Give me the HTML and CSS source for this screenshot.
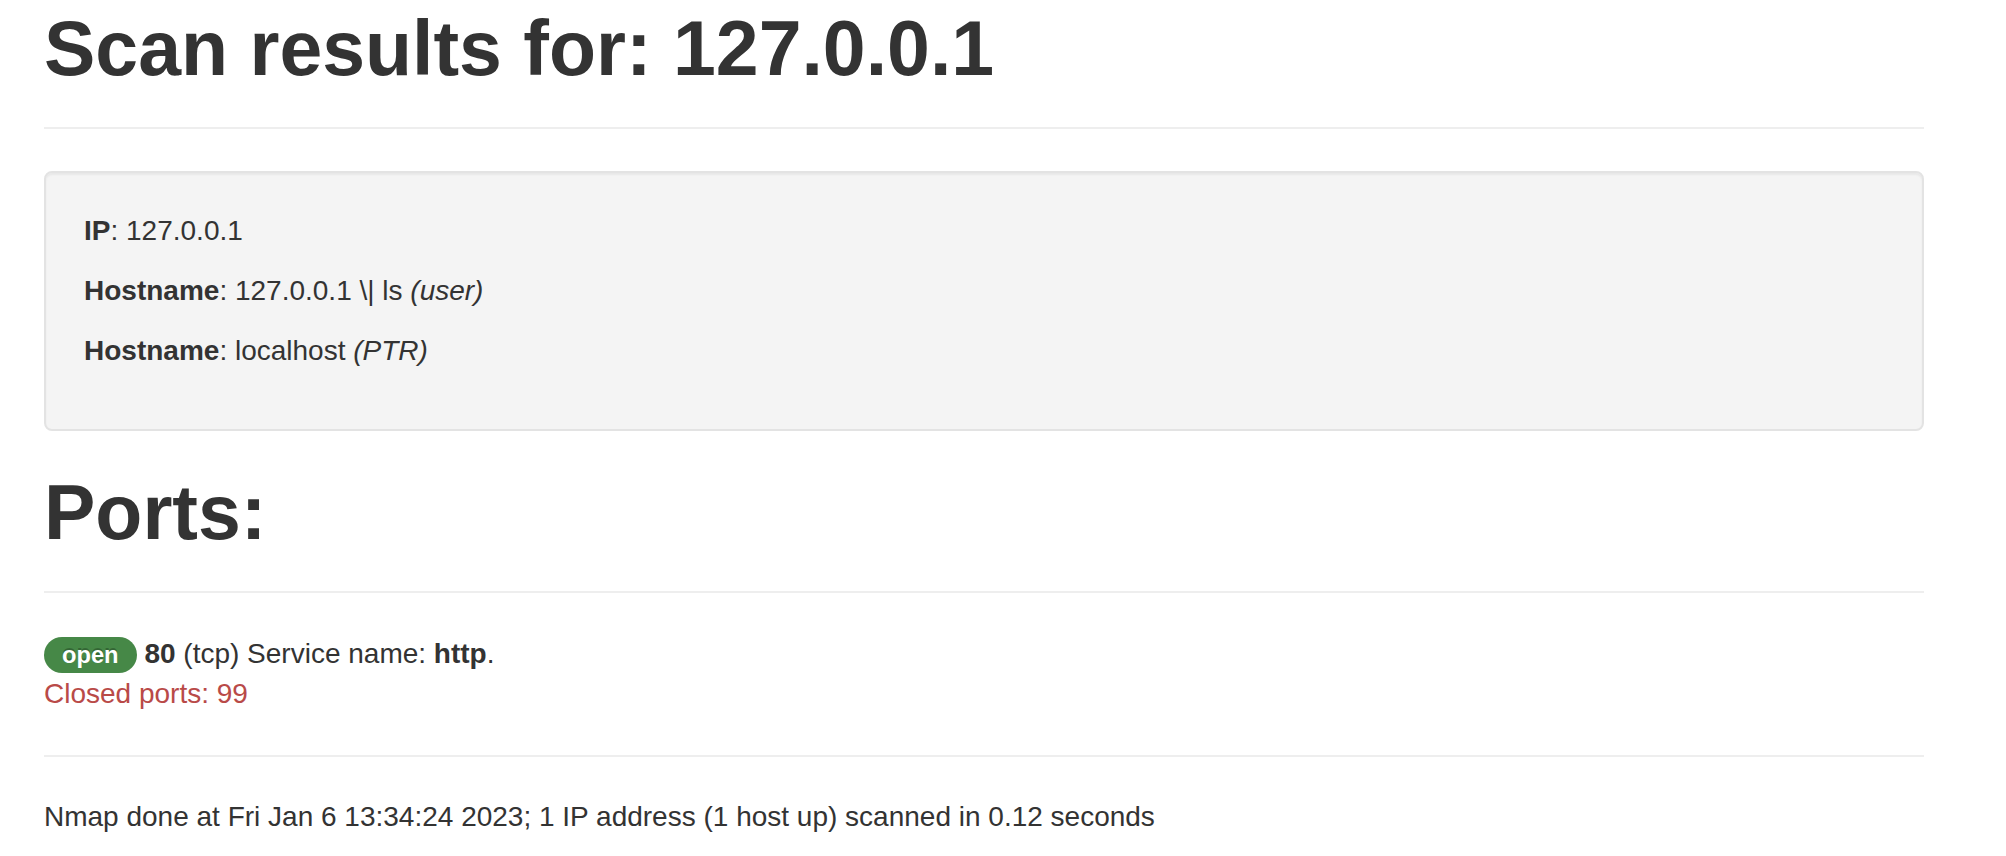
FILE: index.html
```html
<!DOCTYPE html>
<html lang="en">
<head>
<meta charset="utf-8">
<title>Scan results for: 127.0.0.1</title>
<link rel="stylesheet" href="styles.css">
</head>
<body>
<div class="container">
  <div class="page-header page-header-first">
    <h1>Scan results for: 127.0.0.1</h1>
  </div>
  <div class="well">
    <p><strong>IP</strong>: 127.0.0.1</p>
    <p><strong>Hostname</strong>: 127.0.0.1 \| ls <em>(user)</em></p>
    <p><strong>Hostname</strong>: localhost <em>(PTR)</em></p>
  </div>
  <div class="page-header">
    <h1>Ports:</h1>
  </div>
  <div class="ports">
    <div class="port-line"><span class="badge badge-success">open</span> <strong>80</strong> (tcp) Service name: <strong>http</strong>.</div>
    <div class="text-error">Closed ports: 99</div>
  </div>
  <hr class="divider">
  <p class="footer-note">Nmap done at Fri Jan 6 13:34:24 2023; 1 IP address (1 host up) scanned in 0.12 seconds</p>
</div>
</body>
</html>
```
FILE: styles.css
```css
html, body {
  margin: 0;
  padding: 0;
  background: #ffffff;
}

body {
  font-family: "Liberation Sans", Arial, Helvetica, sans-serif;
  font-size: 28px;
  line-height: 40px;
  color: #333333;
}

.container {
  padding: 8px 82px 0 44px;
}

h1 {
  margin: 0;
  font-size: 77px;
  line-height: 80px;
  font-weight: bold;
  color: #333333;
}

.page-header {
  padding-bottom: 39px;
  border-bottom: 2px solid #eeeeee;
  margin: 0 0 41px;
}

.page-header-first {
  margin-bottom: 42px;
}

.well {
  padding: 38px;
  margin-bottom: 41px;
  background-color: #f4f4f4;
  border: 2px solid #e3e3e3;
  border-radius: 8px;
  box-shadow: inset 0 2px 2px rgba(0, 0, 0, 0.05);
}

.well p {
  margin: 0 0 20px;
}

.badge {
  display: inline-block;
  padding: 4px 18px;
  font-size: 23.7px;
  font-weight: bold;
  line-height: 28px;
  color: #ffffff;
  vertical-align: baseline;
  white-space: nowrap;
  text-shadow: 0 -2px 0 rgba(0, 0, 0, 0.25);
  border-radius: 18px;
}

.badge-success {
  background-color: #468847;
}

.text-error {
  color: #b94a48;
}

.divider {
  margin: 41px 0 38px;
  border: 0;
  border-top: 2px solid #eeeeee;
  border-bottom: 2px solid #ffffff;
  height: 0;
}

.footer-note {
  margin: 0 0 20px;
}
```
